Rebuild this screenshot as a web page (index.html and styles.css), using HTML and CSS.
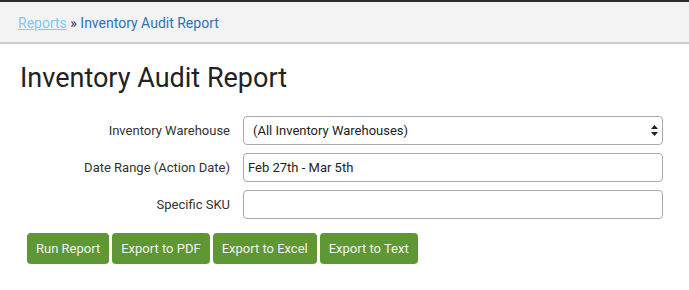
FILE: index.html
```html
<!DOCTYPE html>
<html lang="en">
<head>
    <meta charset="UTF-8">
    <title>Inventory Audit Report</title>
    <link rel="stylesheet" href="styles.css">
</head>
<body>
    <div class="crumbs">
        <a href="#">Reports</a> <span class="sep">&raquo;</span> <span class="current">Inventory Audit Report</span>
    </div>

    <div class="page">
        <h1>Inventory Audit Report</h1>

        <form class="report-form">
            <label for="warehouse">Inventory Warehouse</label>
            <div class="select-wrap">
                <select id="warehouse">
                    <option>(All Inventory Warehouses)</option>
                </select>
                <span class="arrows">
                    <svg width="7" height="11" viewBox="0 0 7 11"><path d="M3.5 0L7 4H0z M3.5 11L0 7h7z" fill="#222"/></svg>
                </span>
            </div>

            <label for="range">Date Range (Action Date)</label>
            <input type="text" id="range" value="Feb 27th - Mar 5th">

            <label for="sku">Specific SKU</label>
            <input type="text" id="sku">
        </form>

        <div class="actions">
            <button>Run Report</button>
            <button>Export to PDF</button>
            <button>Export to Excel</button>
            <button>Export to Text</button>
        </div>
    </div>
</body>
</html>
```

FILE: styles.css
```css
body, html {
    margin: 0;
    padding: 0;
    background: #fff;
    font-family: Roboto, "Liberation Sans", sans-serif;
}
.crumbs {
    border-top: 2px solid #2b2d30;
    border-bottom: 2px solid #cdcdcd;
    background-color: #f3f3f3;
    height: 44px;
    box-sizing: border-box;
    padding: 13px 18px 0;
    font-size: 14px;
    line-height: 17px;
    color: #2c74b8;
}
.crumbs a {
    color: #82c8f2;
    text-decoration: underline;
}
.crumbs .sep {
    color: #333;
}
.page {
    padding: 0 20px;
}
h1 {
    margin: 17px 0 0;
    font-size: 27px;
    font-weight: 400;
    line-height: 34px;
    color: #222;
}
.report-form {
    display: grid;
    grid-template-columns: 210px 420px;
    column-gap: 13px;
    row-gap: 8px;
    margin-top: 21px;
    align-items: center;
}
.report-form label {
    text-align: right;
    font-size: 13px;
    color: #333;
}
.report-form input, .report-form select {
    display: block;
    width: 100%;
    height: 29px;
    box-sizing: border-box;
    border: 1px solid #a9a9a9;
    border-radius: 4px;
    font-family: Roboto, "Liberation Sans", sans-serif;
    font-size: 13px;
    color: #222;
    background: #fff;
    margin: 0;
}
.report-form input {
    padding: 0 4px;
}
.select-wrap {
    position: relative;
}
.report-form select {
    appearance: none;
    padding: 0 9px;
}
.select-wrap .arrows {
    position: absolute;
    right: 5px;
    top: 9px;
    line-height: 0;
    pointer-events: none;
}
.actions {
    display: flex;
    gap: 3px;
    margin-top: 14px;
    padding-left: 7px;
}
.actions button {
    background-color: #5f9734;
    color: #f2f2f2;
    border: none;
    border-radius: 4px;
    height: 31px;
    padding: 0 9px;
    font-family: Roboto, "Liberation Sans", sans-serif;
    font-size: 13px;
    cursor: pointer;
}
```
